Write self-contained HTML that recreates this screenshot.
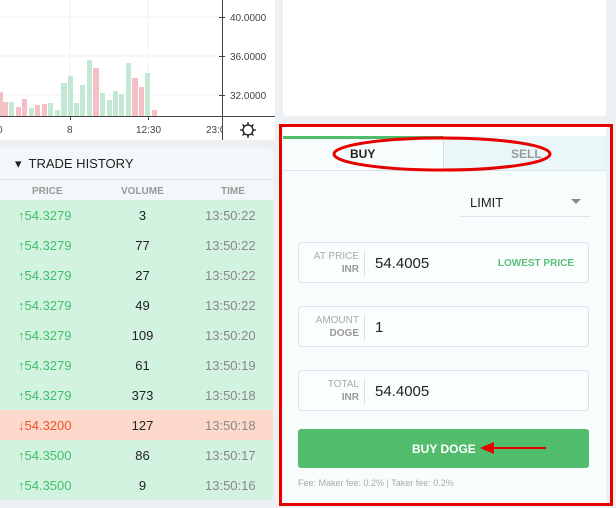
<!DOCTYPE html>
<html><head><style>
*{margin:0;padding:0;box-sizing:border-box}
body{width:616px;height:508px;background:#eef1f4;font-family:"Liberation Sans",sans-serif;position:relative;overflow:hidden}
.abs{position:absolute}
.row{position:absolute;left:0;width:273px;height:30px;font-size:13px}
.row span{position:absolute;top:8px}
.p{left:18px;color:#3fbf6a}
.v{left:110px;width:65px;text-align:center;color:#222}
.t{left:205px;color:#888}
.inp{position:absolute;left:298px;width:291px;height:41px;border:1px solid #dde3e6;border-radius:4px;background:#fbfefe}
.lbl{position:absolute;left:0;width:60px;text-align:right;font-size:10px;color:#aaa;line-height:13px;top:7px}
.lbl b{color:#999}
.sep{position:absolute;left:65px;top:8px;height:25px;border-left:1px solid #ddd}
.val{position:absolute;left:76px;top:12px;font-size:15px;color:#222}
</style></head><body>
<!-- chart -->
<div class="abs" style="left:0;top:0;width:275px;height:140px;background:#fff;border-radius:0 0 4px 0"></div>
<svg class="abs" style="left:0;top:0" width="275" height="140">
<g stroke="#eef0f6" stroke-width="1"><line x1="0" y1="17" x2="222" y2="17"/><line x1="0" y1="56" x2="222" y2="56"/><line x1="0" y1="95" x2="222" y2="95"/><line x1="70" y1="0" x2="70" y2="116"/><line x1="148" y1="0" x2="148" y2="116"/></g>
<g fill="#f5c0c5"><rect x="0" y="92" width="3" height="24"/><rect x="3" y="102" width="5" height="14"/><rect x="16" y="107" width="5" height="9"/><rect x="22" y="99" width="5" height="17"/><rect x="35" y="105" width="5" height="11"/><rect x="42" y="104" width="5" height="12"/><rect x="93" y="68" width="6" height="48"/><rect x="132" y="78" width="6" height="38"/><rect x="139" y="87" width="5" height="29"/><rect x="152" y="110" width="5" height="6"/></g>
<g fill="#c3e8d4"><rect x="9" y="102" width="5" height="14"/><rect x="29" y="108" width="5" height="8"/><rect x="48" y="103" width="5" height="13"/><rect x="55" y="110" width="5" height="6"/><rect x="61" y="83" width="6" height="33"/><rect x="68" y="76" width="5" height="40"/><rect x="74" y="103" width="5" height="13"/><rect x="80" y="85" width="5" height="31"/><rect x="87" y="60" width="5" height="56"/><rect x="100" y="93" width="5" height="23"/><rect x="107" y="100" width="5" height="16"/><rect x="113" y="91" width="5" height="25"/><rect x="119" y="94" width="5" height="22"/><rect x="126" y="63" width="5" height="53"/><rect x="145" y="73" width="5" height="43"/></g>
<line x1="0" y1="116.5" x2="275" y2="116.5" stroke="#444"/>
<line x1="222.5" y1="0" x2="222.5" y2="140" stroke="#444"/>
<g stroke="#444"><line x1="70.5" y1="116" x2="70.5" y2="120"/><line x1="148.5" y1="116" x2="148.5" y2="120"/><line x1="219" y1="17.5" x2="225" y2="17.5"/><line x1="219" y1="56.5" x2="225" y2="56.5"/><line x1="219" y1="95.5" x2="225" y2="95.5"/></g>
<g font-size="10" fill="#444" font-family="Liberation Sans"><text x="230" y="21">40.0000</text><text x="230" y="60">36.0000</text><text x="230" y="99">32.0000</text><text x="-3" y="133">0</text><text x="67" y="133">8</text><text x="136" y="133">12:30</text><text x="206" y="133">23:0</text></g>
<rect x="222" y="118" width="53" height="22" fill="#fff"/><line x1="222.5" y1="116" x2="222.5" y2="140" stroke="#444"/>
<g stroke="#111" stroke-width="1.3" fill="none"><circle cx="248" cy="130" r="5"/><path d="M248 122v3M248 135v3M240 130h3M253 130h3M242.5 124.5l2 2M251.5 133.5l2 2M242.5 135.5l2-2M251.5 126.5l2-2"/></g>
</svg>
<!-- right top white -->
<div class="abs" style="left:283px;top:0;width:323px;height:116px;background:#fff;border-radius:0 0 4px 4px"></div>
<!-- trade history -->
<div class="abs" style="left:0;top:148px;width:273px;height:352px;background:#f4f7f9;border-radius:0 4px 4px 0;overflow:hidden">
<div class="abs" style="left:15px;top:8px;font-size:13px;color:#222">▾&nbsp; TRADE HISTORY</div>
<div class="abs" style="left:0;top:31px;width:273px;border-top:1px solid #dfe4e8"></div>
<div class="abs" style="left:32px;top:38px;font-size:10px;font-weight:bold;color:#999">PRICE</div>
<div class="abs" style="left:121px;top:38px;font-size:10px;font-weight:bold;color:#999">VOLUME</div>
<div class="abs" style="left:221px;top:38px;font-size:10px;font-weight:bold;color:#999">TIME</div>
</div>
<div class="abs" style="left:0;top:200px;width:273px;height:300px;background:#d3f3e1;border-radius:0 0 4px 0"></div>
<div class="row" style="top:200px"><span class="p">↑54.3279</span><span class="v">3</span><span class="t">13:50:22</span></div>
<div class="row" style="top:230px"><span class="p">↑54.3279</span><span class="v">77</span><span class="t">13:50:22</span></div>
<div class="row" style="top:260px"><span class="p">↑54.3279</span><span class="v">27</span><span class="t">13:50:22</span></div>
<div class="row" style="top:290px"><span class="p">↑54.3279</span><span class="v">49</span><span class="t">13:50:22</span></div>
<div class="row" style="top:320px"><span class="p">↑54.3279</span><span class="v">109</span><span class="t">13:50:20</span></div>
<div class="row" style="top:350px"><span class="p">↑54.3279</span><span class="v">61</span><span class="t">13:50:19</span></div>
<div class="row" style="top:380px"><span class="p">↑54.3279</span><span class="v">373</span><span class="t">13:50:18</span></div>
<div class="row" style="top:410px;background:#fdd9cc"><span class="p" style="color:#f0522a">↓54.3200</span><span class="v">127</span><span class="t">13:50:18</span></div>
<div class="row" style="top:440px"><span class="p">↑54.3500</span><span class="v">86</span><span class="t">13:50:17</span></div>
<div class="row" style="top:470px"><span class="p">↑54.3500</span><span class="v">9</span><span class="t">13:50:16</span></div>
<!-- buy panel -->
<div class="abs" style="left:283px;top:127px;width:323px;height:378px;background:#fff"></div>
<div class="abs" style="left:283px;top:136px;width:323px;height:366px;background:#f7fdfd;border-radius:4px"></div>
<div class="abs" style="left:283px;top:136px;width:160px;height:3px;background:#4fbd6b"></div>
<div class="abs" style="left:443px;top:136px;width:163px;height:34px;background:#eaf7f8;border-left:1px solid #ddd"></div>
<div class="abs" style="left:283px;top:170px;width:323px;border-top:1px solid #dde3e6"></div>
<div class="abs" style="left:350px;top:147px;font-size:12px;font-weight:bold;color:#222">BUY</div>
<div class="abs" style="left:511px;top:147px;font-size:12px;font-weight:bold;color:#999">SELL</div>
<svg class="abs" style="left:325px;top:134px" width="235" height="42"><ellipse cx="117" cy="20" rx="108" ry="16" fill="none" stroke="#e60000" stroke-width="3"/></svg>
<div class="abs" style="left:470px;top:195px;font-size:13px;color:#222">LIMIT</div>
<div class="abs" style="left:571px;top:199px;width:0;height:0;border-left:5px solid transparent;border-right:5px solid transparent;border-top:5px solid #888"></div>
<div class="abs" style="left:460px;top:216px;width:130px;border-top:1px solid #dde3e6"></div>
<div class="inp" style="top:242px"><div class="lbl">AT PRICE<br><b>INR</b></div><div class="sep"></div><div class="val">54.4005</div><div class="abs" style="right:14px;top:15px;font-size:10px;font-weight:bold;color:#5bbf7a">LOWEST PRICE</div></div>
<div class="inp" style="top:306px"><div class="lbl">AMOUNT<br><b>DOGE</b></div><div class="sep"></div><div class="val">1</div></div>
<div class="inp" style="top:370px"><div class="lbl">TOTAL<br><b>INR</b></div><div class="sep"></div><div class="val">54.4005</div></div>
<div class="abs" style="left:298px;top:429px;width:291px;height:39px;background:#52bd6d;border-radius:3px"></div>
<div class="abs" style="left:412px;top:442px;font-size:12px;font-weight:bold;color:#fff">BUY DOGE</div>
<svg class="abs" style="left:478px;top:438px" width="72" height="20"><line x1="12" y1="10" x2="68" y2="10" stroke="#e60000" stroke-width="2"/><polygon points="2,10 16,4 16,16" fill="#e60000"/></svg>
<div class="abs" style="left:298px;top:478px;font-size:9px;color:#aaa">Fee: Maker fee: 0.2% | Taker fee: 0.2%</div>
<div class="abs" style="left:279px;top:124px;width:334px;height:382px;border:3px solid #e60000"></div>
</body></html>
